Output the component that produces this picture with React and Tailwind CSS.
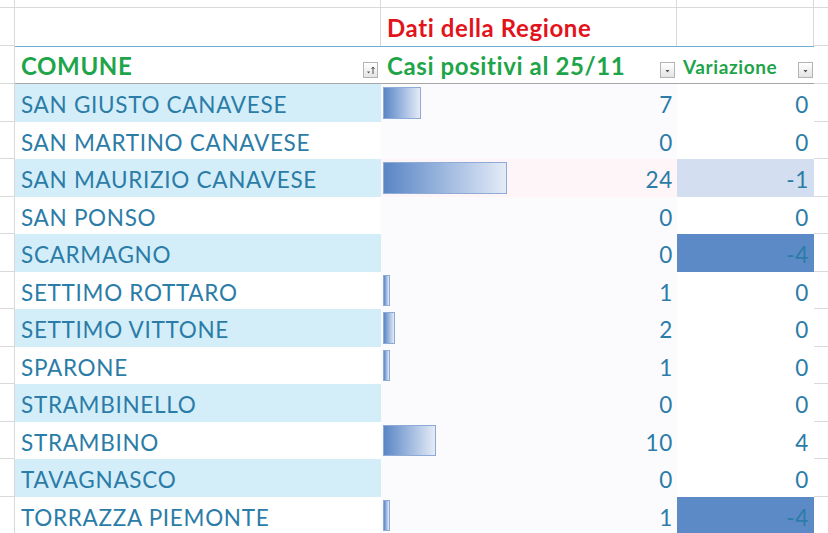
import React from "react";

const rows = [
  { name: "SAN GIUSTO CANAVESE", casi: 7, varz: 0 },
  { name: "SAN MARTINO CANAVESE", casi: 0, varz: 0 },
  { name: "SAN MAURIZIO CANAVESE", casi: 24, varz: -1 },
  { name: "SAN PONSO", casi: 0, varz: 0 },
  { name: "SCARMAGNO", casi: 0, varz: -4 },
  { name: "SETTIMO ROTTARO", casi: 1, varz: 0 },
  { name: "SETTIMO VITTONE", casi: 2, varz: 0 },
  { name: "SPARONE", casi: 1, varz: 0 },
  { name: "STRAMBINELLO", casi: 0, varz: 0 },
  { name: "STRAMBINO", casi: 10, varz: 4 },
  { name: "TAVAGNASCO", casi: 0, varz: 0 },
  { name: "TORRAZZA PIEMONTE", casi: 1, varz: -4 },
];

function FilterButton({ sorted, className }) {
  return (
    <div
      className={`absolute bottom-[5px] flex h-[16px] w-[15px] items-center justify-center border border-[#b4b4b4] bg-gradient-to-b from-white to-[#e4e4e4] ${className}`}
    >
      <svg width="11" height="11" viewBox="0 0 11 11">
        {sorted ? (
          <>
            <path d="M2 6.5 L5 6.5 L3.5 8.5 Z" fill="#505050" />
            <path d="M8 2.5 L8 9" stroke="#505050" strokeWidth="1" />
            <path d="M6.5 4 L8 2 L9.5 4" stroke="#505050" strokeWidth="1" fill="none" />
          </>
        ) : (
          <path d="M3.5 5 L7.5 5 L5.5 7.5 Z" fill="#505050" />
        )}
      </svg>
    </div>
  );
}

function varBg(v) {
  if (v === -4) return "bg-[#5b8ac6]";
  if (v === -1) return "bg-[#d3dff0]";
  return "";
}

export default function App() {
  return (
    <div
      className="h-[533px] w-[828px] overflow-hidden bg-white text-[#2b7ca7]"
      style={{ fontFamily: "Lato, 'Open Sans', sans-serif" }}
    >
      {/* row 1 */}
      <div className="flex h-[8px] border-b border-[#d9d9d9]">
        <div className="w-[15px] border-r border-[#d9d9d9]" />
        <div className="w-[366px] border-r border-[#d9d9d9]" />
        <div className="w-[296px] border-r border-[#d9d9d9]" />
        <div className="w-[137px] border-r border-[#d9d9d9]" />
        <div className="flex-1" />
      </div>
      {/* row 2 */}
      <div className="flex h-[38px]">
        <div className="w-[15px] border-r border-b border-[#d9d9d9]" />
        <div className="w-[366px] border-r border-[#d9d9d9]" />
        <div className="flex w-[296px] items-end whitespace-nowrap border-r border-[#d9d9d9] pb-[6px] pl-[6px] text-[24px] leading-none font-bold tracking-[0.6px] text-[#e3131b]">
          Dati della Regione
        </div>
        <div className="w-[137px] border-r border-[#d9d9d9]" />
        <div className="flex-1 border-b border-[#d9d9d9]" />
      </div>
      {/* header row */}
      <div className="flex h-[38px]">
        <div className="w-[15px] border-r border-b border-[#d9d9d9]" />
        <div className="flex w-[799px] border-t border-b border-t-[#6eaed0] border-b-[#a6a6a6] font-bold leading-none text-[#1ea449]">
          <div className="relative flex w-[366px] items-end whitespace-nowrap pb-[5px] pl-[6px] text-[24px] tracking-[0.6px]">
            COMUNE
            <FilterButton sorted className="right-[3px]" />
          </div>
          <div className="relative flex w-[296px] items-end whitespace-nowrap pb-[5px] pl-[6px] text-[24px] tracking-[0.6px]">
            Casi positivi al 25/11
            <FilterButton className="right-[2px]" />
          </div>
          <div className="relative flex w-[137px] items-end whitespace-nowrap pb-[7px] pl-[6px] text-[19px] tracking-[0.6px]">
            Variazione
            <FilterButton className="right-[1px]" />
          </div>
        </div>
        <div className="flex-1 border-b border-[#d9d9d9]" />
      </div>
      {/* data rows */}
      {rows.map((r, i) => (
        <div key={r.name} className="flex h-[37.5px]">
          <div className="w-[15px] border-r border-b border-[#d9d9d9]" />
          <div
            className={`flex w-[366px] items-center whitespace-nowrap pl-[6px] pt-[5px] text-[22.5px] tracking-[0.7px] ${
              i % 2 === 0 ? "bg-[#d4eef9]" : "bg-white"
            }`}
          >
            {r.name}
          </div>
          <div
            className={`relative flex w-[296px] items-center justify-end pr-[4px] pt-[5px] text-[22.5px] tracking-[0.7px] ${
              r.casi === 24 ? "bg-[#fdf5f7]" : "bg-[#fbfbfe]"
            }`}
          >
            {r.casi > 0 && (
              <div
                className="absolute left-[2px] top-[3px] bottom-[3px] border border-[#8eaad6] bg-gradient-to-r from-[#5a86c5] to-[#e4ebf6]"
                style={{ width: r.casi * 5.1 + 2 }}
              />
            )}
            <span className="relative">{r.casi}</span>
          </div>
          <div
            className={`flex w-[137px] items-center justify-end pr-[5px] pt-[5px] text-[22.5px] tracking-[0.7px] ${varBg(r.varz)}`}
          >
            {r.varz}
          </div>
          <div className="flex-1 border-b border-[#d9d9d9]" />
        </div>
      ))}
    </div>
  );
}
